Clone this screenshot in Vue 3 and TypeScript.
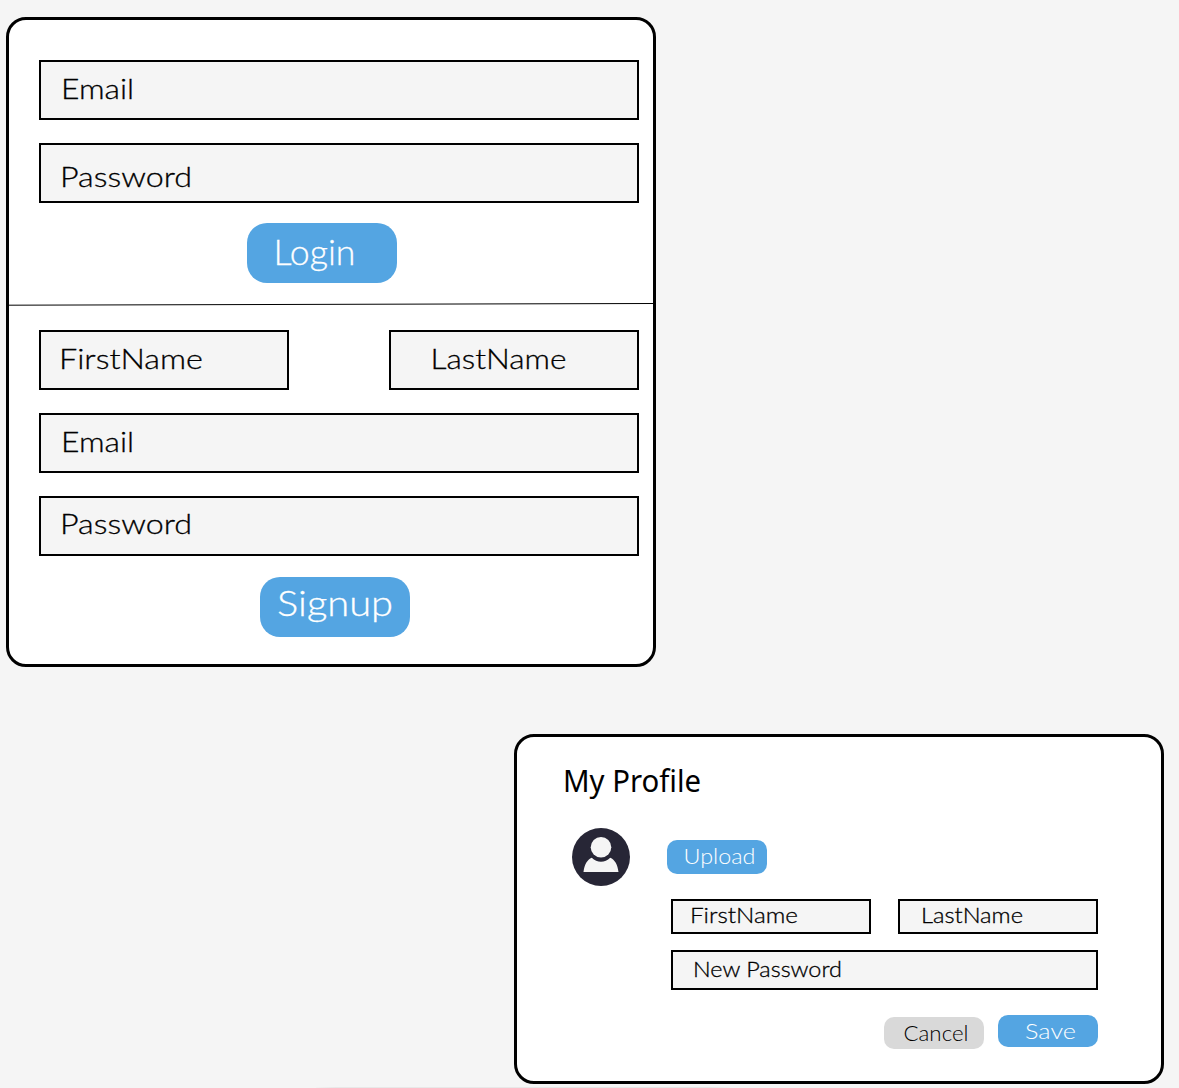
<script setup lang="ts">
import { defineComponent, h } from 'vue'

/* Text with a fixed drawn width, placed by its left edge and baseline. */
const Label = defineComponent({
  props: {
    text: { type: String, required: true },
    x: { type: Number, required: true },
    y: { type: Number, required: true },
    w: { type: Number, required: true },
  },
  setup(props) {
    return () =>
      h('svg', { class: 'label', width: '100%', height: '100%' }, [
        h(
          'text',
          { x: props.x, y: props.y, textLength: props.w, lengthAdjust: 'spacingAndGlyphs' },
          props.text,
        ),
      ])
  },
})
</script>

<template>
  <main class="canvas">
    <section class="card auth">
      <form class="login" @submit.prevent>
        <div class="field"><Label text="Email" :x="20" :y="36.5" :w="73" /></div>
        <div class="field"><Label text="Password" :x="19" :y="41.5" :w="132" /></div>
        <button class="btn big login-btn"><Label text="Login" :x="26.500" :y="42" :w="82" /></button>
      </form>
      <svg class="divider" width="644" height="4" viewBox="0 0 644 4">
        <line x1="0" y1="2.2" x2="644" y2="0.5" stroke="#000" stroke-width="1" />
      </svg>
      <form class="signup" @submit.prevent>
        <div class="row">
          <div class="field half"><Label text="FirstName" :x="18" :y="36.5" :w="144" /></div>
          <div class="field half"><Label text="LastName" :x="39.500" :y="36.5" :w="136" /></div>
        </div>
        <div class="field"><Label text="Email" :x="20" :y="36.5" :w="73" /></div>
        <div class="field"><Label text="Password" :x="19" :y="35.5" :w="132" /></div>
        <button class="btn big signup-btn"><Label text="Signup" :x="17" :y="39" :w="116" /></button>
      </form>
    </section>

    <section class="card profile">
      <h1 class="title"><Label text="My Profile" :x="0" :y="30" :w="138" /></h1>
      <div class="photo">
        <svg class="avatar" width="58" height="58" viewBox="0 0 58 58">
          <circle cx="29" cy="29" r="29" fill="#272636" />
          <path d="M11.5 44C12.3 37 15.200 31.500 19.800 29.800C25 35 33 35 38.200 29.800C42.800 31.500 45.700 37 46.500 44Z" fill="#f5f5f5" />
          <circle cx="29" cy="19.200" r="10.300" fill="#f5f5f5" />
        </svg>
        <button class="btn small upload"><Label text="Upload" :x="16.500" :y="24" :w="72" /></button>
      </div>
      <form class="details" @submit.prevent>
        <div class="row">
          <div class="field"><Label text="FirstName" :x="17" :y="22" :w="108" /></div>
          <div class="field"><Label text="LastName" :x="21" :y="22" :w="102" /></div>
        </div>
        <div class="field wide"><Label text="New Password" :x="20" :y="25" :w="149" /></div>
        <div class="actions">
          <button class="btn small cancel"><Label text="Cancel" :x="19.500" :y="24" :w="65" /></button>
          <button class="btn small save"><Label text="Save" :x="27" :y="24" :w="51" /></button>
        </div>
      </form>
    </section>
    <div class="edge"></div>
  </main>
</template>

<style>
body {
  background: #f5f5f5;
}

.label {
  display: block;
  overflow: visible;
}

.label text {
  fill: currentColor;
}

.field .label text,
.big .label text {
  stroke: currentColor;
  stroke-width: 0.3px;
}
</style>

<style scoped>
* {
  box-sizing: border-box;
}

.canvas {
  width: 1179px;
  height: 1088px;
  overflow: hidden;
  padding: 17px 0 0 6px;
  display: flex;
  flex-direction: column;
  background: #f5f5f5;
  color: #000;
  font-family: Lato, "Liberation Sans", sans-serif;
  font-weight: 300;
}

.card {
  flex: none;
  width: 650px;
  background: #fff;
  border: 3px solid #000;
  border-radius: 20px;
}

.auth {
  height: 650px;
}

.login {
  height: 283px;
  padding: 40px 14px 0 30px;
  display: flex;
  flex-direction: column;
}

.field {
  flex: none;
  height: 60px;
  border: 2px solid #000;
  background: #f5f5f5;
  font-size: 28px;
}

.login .field + .field,
.signup .field {
  margin-top: 23px;
}

.btn {
  flex: none;
  display: block;
  margin: 0;
  padding: 0;
  border: 0;
  background: #54a5e2;
  color: #fff;
  font-family: inherit;
  font-weight: 300;
}

.big {
  width: 150px;
  height: 60px;
  border-radius: 20px;
  font-size: 35px;
}

.login-btn {
  margin: 20px 0 0 208px;
}

.signup-btn {
  margin: 21px 0 0 221px;
}

.divider {
  display: block;
}

.signup {
  padding: 23px 14px 0 30px;
  display: flex;
  flex-direction: column;
}

.row {
  display: flex;
  justify-content: space-between;
}

.signup .row .field {
  margin-top: 0;
}

.half {
  width: 250px;
}

.profile {
  height: 350px;
  margin: 67px 0 0 508px;
}

.title {
  width: 140px;
  height: 40px;
  margin: 25px 0 0 46px;
  font-family: "Noto Sans", sans-serif;
  font-size: 31px;
  font-weight: 400;
}

.photo {
  display: flex;
  align-items: flex-start;
  margin: 26px 0 0 55px;
}

.small {
  width: 100px;
  border-radius: 10px;
  font-size: 21px;
}

.upload {
  height: 34px;
  margin: 12px 0 0 37px;
}

.details {
  width: 427px;
  margin: 13px 0 0 154px;
}

.details .field {
  height: 35px;
  font-size: 21px;
}

.details .row .field {
  width: 200px;
}

.details .wide {
  height: 40px;
  margin-top: 16px;
}

.actions {
  display: flex;
  justify-content: flex-end;
  gap: 14px;
  margin-top: 25px;
}

.cancel {
  height: 32px;
  margin-top: 2px;
  background: #d9d9d9;
  color: #000;
  font-size: 22px;
}

.save {
  height: 32px;
}

.edge {
  width: 414px;
  height: 1px;
  margin: 3px 0 0 310px;
  background: linear-gradient(90deg, #f2f2f2, #e8e8e8 5%, #e8e8e8 95%, #f2f2f2);
}
</style>
